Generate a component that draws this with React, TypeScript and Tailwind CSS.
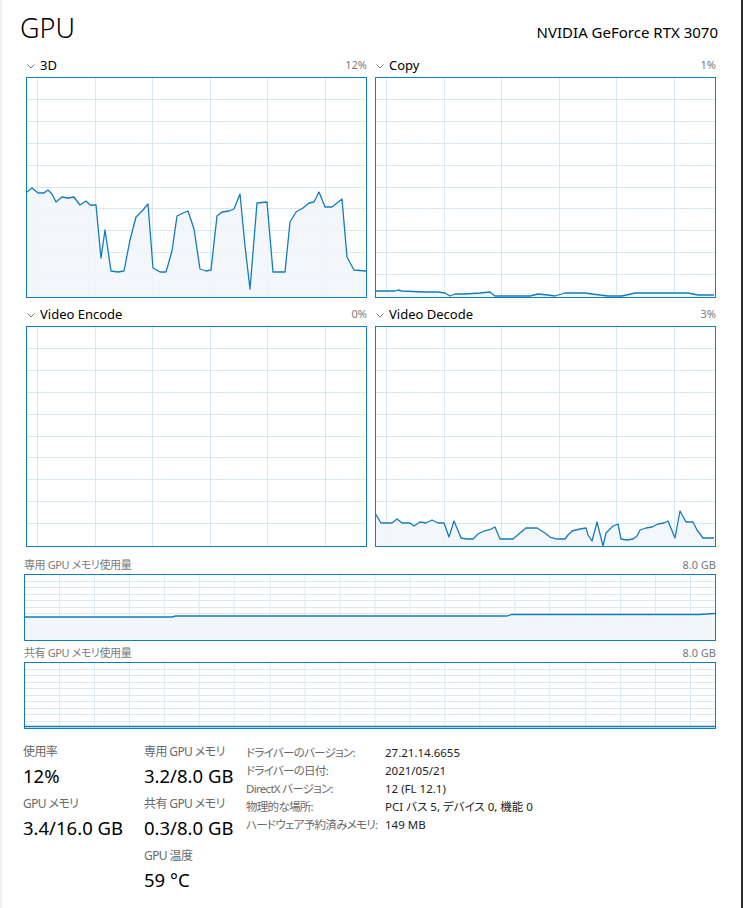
import React from 'react'

type Pt = [number, number]

const blue = '#117dbb'
const fill = '#f1f6fa'
const grid = '#d9e9f3'

const d3: Pt[] = [[27,192],[32,188],[38,193],[44,193],[48,190],[52,194],[56,202],[62,197],[68,198],[74,197],[80,205],[86,201],[90,205],[96,205],[101,258],[105,230],[111,271],[118,272],[124,271],[130,240],[136,217],[143,210],[148,204],[153,268],[160,272],[166,272],[172,251],[177,216],[183,213],[188,211],[194,229],[200,269],[206,271],[211,270],[217,216],[222,212],[229,211],[234,209],[240,194],[245,246],[250,289],[257,203],[267,202],[273,272],[285,272],[290,222],[296,212],[303,208],[309,203],[314,202],[319,192],[325,207],[332,207],[342,199],[347,257],[354,270],[366,271]]

const copy: Pt[] = [[375,291],[395,291],[398,290],[402,291],[425,292],[438,292],[445,293],[450,296],[455,294],[465,294],[480,293],[490,292],[495,296],[530,296],[538,294],[548,295],[555,296],[565,293],[585,293],[592,294],[600,295],[608,296],[622,296],[635,293],[688,293],[698,295],[714,295]]

const decode: Pt[] = [[375,513],[381,523],[392,523],[397,519],[402,523],[410,523],[414,526],[420,522],[426,523],[432,520],[438,523],[444,523],[449,537],[454,521],[461,538],[467,539],[473,539],[478,534],[484,531],[491,529],[495,527],[500,539],[513,539],[520,533],[526,528],[537,528],[545,533],[550,537],[557,539],[565,539],[568,535],[572,531],[580,529],[586,528],[588,535],[592,541],[597,522],[603,546],[606,533],[613,526],[618,524],[621,539],[627,540],[633,539],[637,536],[640,530],[646,528],[652,527],[658,524],[664,523],[668,521],[675,538],[680,511],[686,522],[693,522],[697,530],[703,538],[714,538]]

const dedicated: Pt[] = [[25,617],[172,617],[176,616],[508,616],[512,614.5],[700,614.5],[716,613.5]]
const shared: Pt[] = [[25,725.5],[716,725.5]]

function Graph({ x0, y0, w, h, rows, colStart, colStep, pts, height }: {
  x0: number; y0: number; w: number; h: number; rows: number
  colStart: number; colStep: number; pts?: Pt[]; height: string
}) {
  const vs: number[] = []
  for (let x = x0 + colStart; x < x0 + w; x += colStep) vs.push(Math.round(x) + 0.5)
  const hs: number[] = []
  for (let i = 1; i < rows; i++) hs.push(Math.round(y0 + (i * h) / rows) - 0.5)
  const line = pts ? pts.map((p) => p.join(',')).join(' ') : ''
  const area = pts
    ? `${line} ${pts[pts.length - 1][0]},${y0 + h} ${pts[0][0]},${y0 + h}`
    : ''

  return (
    <div className={`border border-[#117dbb] ${height}`}>
      <svg
        className="block w-full h-full"
        viewBox={`${x0} ${y0} ${w} ${h}`}
        preserveAspectRatio="none"
      >
        {vs.map((x) => (
          <line key={'v' + x} x1={x} x2={x} y1={y0} y2={y0 + h} stroke={grid} strokeWidth="1" shapeRendering="crispEdges" />
        ))}
        {hs.map((y) => (
          <line key={'h' + y} x1={x0} x2={x0 + w} y1={y} y2={y} stroke={grid} strokeWidth="1" shapeRendering="crispEdges" />
        ))}
        {pts && (
          <>
            <polygon points={area} fill={fill} fillOpacity="0.85" />
            <polyline points={line} fill="none" stroke={blue} strokeWidth="1.3" strokeLinejoin="round" />
          </>
        )}
      </svg>
    </div>
  )
}

function Chevron() {
  return (
    <svg width="8" height="5" viewBox="0 0 8 5" className="mt-[1px]">
      <polyline points="0.5,0.5 4,4 7.5,0.5" fill="none" stroke="#7a7a7a" strokeWidth="1" />
    </svg>
  )
}

function Panel({ title, pct, x0, y0, pts }: { title: string; pct: string; x0: number; y0: number; pts?: Pt[] }) {
  return (
    <div>
      <div className="h-[23px] flex items-center justify-between">
        <div className="flex items-center gap-[5px] pl-[1px]">
          <Chevron />
          <span className="text-[13px] text-black">{title}</span>
        </div>
        <span className="text-[11px] text-[#7a7a7a]">{pct}</span>
      </div>
      <Graph x0={x0} y0={y0} w={339} h={219} rows={10} colStart={10} colStep={57.6} pts={pts} height="h-[221px]" />
    </div>
  )
}

function Stat({ label, value }: { label: string; value: string }) {
  return (
    <div className="mb-[4px]">
      <div className="h-[16px] leading-[16px] text-[12px] tracking-[-0.6px] text-[#6a6a6a] whitespace-nowrap">{label}</div>
      <div className="h-[32px] leading-[32px] text-[18.5px] text-black whitespace-nowrap">{value}</div>
    </div>
  )
}

const info = [
  ['ドライバーのバージョン:', '27.21.14.6655'],
  ['ドライバーの日付:', '2021/05/21'],
  ['DirectX バージョン:', '12 (FL 12.1)'],
  ['物理的な場所:', 'PCI バス 5, デバイス 0, 機能 0'],
  ['ハードウェア予約済みメモリ:', '149 MB'],
]

export default function App() {
  return (
    <div className="w-[743px] h-[908px] bg-white border-l-2 border-l-[#f0f0f0] border-r-2 border-r-[#2b2b2b] font-['Noto_Sans','Noto_Sans_CJK_JP',sans-serif] [font-feature-settings:'palt'] pl-[22px] pr-[25px] overflow-hidden">
      {/* HEADER */}
      <header className="flex items-baseline justify-between pt-[14px] h-[54px]">
        <h1 className="text-[27px] leading-none font-light text-black -ml-[4px]">GPU</h1>
        <span className="text-[15px] text-black -mr-[2px]">NVIDIA GeForce RTX 3070</span>
      </header>

      {/* ENGINES */}
      <div className="ml-[2px] grid grid-cols-[341px_341px] gap-x-[8px] gap-y-[5px]">
        <Panel title="3D" pct="12%" x0={27} y0={78} pts={d3} />
        <Panel title="Copy" pct="1%" x0={376} y0={78} pts={copy} />
        <Panel title="Video Encode" pct="0%" x0={27} y0={327} />
        <Panel title="Video Decode" pct="3%" x0={376} y0={327} pts={decode} />
      </div>

      {/* MEMORY */}
      <div className="mt-[9px] h-[18px] flex items-center justify-between text-[11px] text-[#7a7a7a]">
        <span className="tracking-[-0.4px]">専用 GPU メモリ使用量</span>
        <span>8.0 GB</span>
      </div>
      <Graph x0={25} y0={575} w={691} h={65} rows={10} colStart={34} colStep={35.1} pts={dedicated} height="h-[67px]" />

      <div className="mt-[3px] h-[18px] flex items-center justify-between text-[11px] text-[#7a7a7a]">
        <span className="tracking-[-0.4px]">共有 GPU メモリ使用量</span>
        <span>8.0 GB</span>
      </div>
      <Graph x0={25} y0={662} w={691} h={65} rows={10} colStart={34} colStep={35.1} pts={shared} height="h-[67px]" />

      {/* STATS */}
      <div className="mt-[15px] flex">
        <div className="w-[121px] -ml-[1px]">
          <Stat label="使用率" value="12%" />
          <Stat label="GPU メモリ" value="3.4/16.0 GB" />
        </div>
        <div className="w-[102px]">
          <Stat label="専用 GPU メモリ" value="3.2/8.0 GB" />
          <Stat label="共有 GPU メモリ" value="0.3/8.0 GB" />
          <Stat label="GPU 温度" value="59 °C" />
        </div>
        <div className="text-[12px] leading-[18px]">
          {info.map(([k, v]) => (
            <div key={k} className="flex">
              <span className="w-[139px] text-[#6a6a6a] text-[11.5px] tracking-[-0.7px] whitespace-nowrap">{k}</span>
              <span className="text-[#222] text-[11.5px] whitespace-nowrap">{v}</span>
            </div>
          ))}
        </div>
      </div>
    </div>
  )
}
